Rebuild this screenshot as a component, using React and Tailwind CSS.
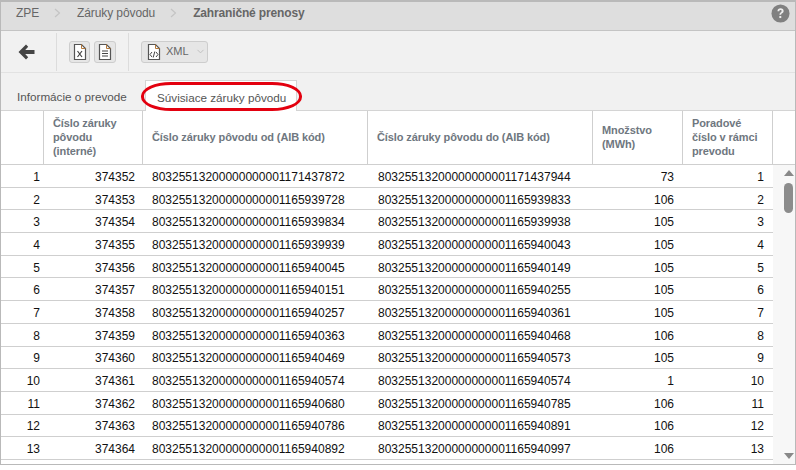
import React from 'react';
import {ChevronDown} from 'lucide-react';

const PREFIX = '8032551320000000000';

// cislo, od, do, mnozstvo
const rows = [
    [374352, '1171437872', '1171437944', 73],
    [374353, '1165939728', '1165939833', 106],
    [374354, '1165939834', '1165939938', 105],
    [374355, '1165939939', '1165940043', 105],
    [374356, '1165940045', '1165940149', 105],
    [374357, '1165940151', '1165940255', 105],
    [374358, '1165940257', '1165940361', 105],
    [374359, '1165940363', '1165940468', 106],
    [374360, '1165940469', '1165940573', 105],
    [374361, '1165940574', '1165940574', 1],
    [374362, '1165940680', '1165940785', 106],
    [374363, '1165940786', '1165940891', 106],
    [374364, '1165940892', '1165940997', 106],
];

function FileIcon({label}) {
    return (
        <svg width="16" height="18" viewBox="0 0 16 18" fill="none">
            <path d="M2.5 1.5h7l4 4v11h-11z" fill="#fff" stroke="#555" strokeWidth="1.2"/>
            <path d="M9.5 1.5v4h4" stroke="#b5793a" strokeWidth="1"/>
            {label === 'x' && <path d="M5.5 8l4.5 6M10 8l-4.5 6" stroke="#444" strokeWidth="1.2"/>}
            {label === 'doc' && <path d="M5 8h6M5 10.500h6M5 13h6" stroke="#444" strokeWidth="1.1"/>}
            {label === 'xml' && <path d="M6 9l-2 2.500 2 2.500M10 9l2 2.500-2 2.500M8.800 8.500l-1.600 6" stroke="#444" strokeWidth="1"/>}
        </svg>
    );
}

function Chevron() {
    return (
        <svg width="7" height="10" viewBox="0 0 7 10" className="mx-[15px]">
            <path d="M1 1l4.500 4L1 9" fill="none" stroke="#c4c4c4" strokeWidth="1.200"/>
        </svg>
    );
}

const headCell = 'border-r border-[#cfcfcf] px-[9px] pb-[1px] flex items-center text-[11px] tracking-[-0.1px] leading-[14px] font-bold text-[#6f7780]';
const grid = 'grid grid-cols-[43px_99px_225px_225px_90px_90px]';

export default function App() {
    return (
        <div className="w-[796px] h-[465px] border border-[#b9b9b9] border-t-2 flex flex-col bg-white overflow-hidden font-['Liberation_Sans',Arial,sans-serif]">

            {/* Breadcrumb */}
            <div className="h-[29px] shrink-0 bg-[#dedede] border-b border-[#c4c4c4] flex items-center pl-[15px] pr-[5px] pb-[6px] text-[12px] tracking-[-0.1px] text-[#666]">
                <span>ZPE</span>
                <Chevron/>
                <span className="ml-[1px]">Záruky pôvodu</span>
                <Chevron/>
                <span className="ml-[1px] font-bold tracking-[-0.15px]">Zahraničné prenosy</span>
                <svg width="19" height="19" viewBox="0 0 20 20" className="ml-auto">
                    <circle cx="10" cy="10" r="9.500" fill="#808080"/>
                    <path d="M6.800 7.600C6.900 5.600 8.200 4.600 10.100 4.600c1.900 0 3.200 1.100 3.200 2.700 0 1.300-.8 1.900-1.600 2.500-.7.500-1 .8-1 1.600H8.900c0-1.300.4-1.900 1.200-2.500.7-.5 1.100-.8 1.100-1.500 0-.7-.5-1.100-1.200-1.100-.8 0-1.200.5-1.300 1.300z" fill="#eee"/>
                    <rect x="8.800" y="12.600" width="2" height="2.200" fill="#eee"/>
                </svg>
            </div>

            {/* Toolbar */}
            <div className="h-[42px] shrink-0 bg-[#f1f1f1] border-b border-[#e2e2e2] flex items-center">
                <div className="w-[56px] h-[38px] border-r border-[#dcdcdc] flex items-center pl-[17px]">
                    <svg width="17" height="16" viewBox="0 0 17 16">
                        <path d="M8 .5L.5 8 8 15.500l2.200-2.200-3-3.200H16.500V5.900H7.200l3-3.200z" fill="#444"/>
                    </svg>
                </div>
                <div className="w-[72px] h-[38px] border-r border-[#dcdcdc] flex items-center pl-[12px] gap-[4px]">
                    <button className="w-[21px] h-[22px] bg-[#e6e6e6] border border-[#cdcdcd] rounded-[3px] flex items-center justify-center">
                        <FileIcon label="x"/>
                    </button>
                    <button className="w-[22px] h-[22px] bg-[#e6e6e6] border border-[#cdcdcd] rounded-[3px] flex items-center justify-center">
                        <FileIcon label="doc"/>
                    </button>
                </div>
                <button className="ml-[12px] w-[67px] h-[22px] bg-[#e6e6e6] border border-[#cdcdcd] rounded-[3px] flex items-center pl-[4px] text-[11px] text-[#666]">
                    <FileIcon label="xml"/>
                    <span className="ml-[4px]">XML</span>
                    <ChevronDown size={11} className="ml-[6px] text-[#bdbdbd]"/>
                </button>
            </div>

            {/* Tabs */}
            <div className="h-[38px] shrink-0 bg-[#f1f1f1] border-b border-[#d4d4d4] flex items-end relative">
                <div className="h-[30px] w-[144px] flex items-center pl-[16px] pt-[3px] text-[11.7px] text-[#555]">Informácie o prevode</div>
                <div className="h-[31px] w-[152px] -mb-px bg-white border border-b-0 border-[#d4d4d4] flex items-center pl-[11px] pt-[3px] text-[11.7px] text-[#555]">Súvisiace záruky pôvodu</div>
                <div className="absolute left-[140px] top-[9px] w-[161px] h-[29px] rounded-[30px/14px] border-[3px] border-[#e3000f]"></div>
            </div>

            {/* Hlavicka tabulky */}
            <div className="h-[54px] shrink-0 flex border-b border-[#cfcfcf]">
                <div className={grid}>
                    <div className={headCell}></div>
                    <div className={headCell}>Číslo záruky pôvodu (interné)</div>
                    <div className={headCell}>Číslo záruky pôvodu od (AIB kód)</div>
                    <div className={headCell}>Číslo záruky pôvodu do (AIB kód)</div>
                    <div className={headCell}>Množstvo (MWh)</div>
                    <div className={headCell}>Poradové číslo v rámci prevodu</div>
                </div>
            </div>

            {/* Riadky + scrollbar */}
            <div className="flex flex-1 min-h-0">
                <div className="w-[772px]">
                    {rows.map((r, i) => (
                        <div key={r[0]} className={`${grid} h-[22.7px] pt-[2px] border-b border-[#cfcfcf] items-center text-[12px] text-[#111]`}>
                            <div className="text-right pr-[4px]">{i + 1}</div>
                            <div className="text-right pr-[8px]">{r[0]}</div>
                            <div className="pl-[9px]">{PREFIX + r[1]}</div>
                            <div className="pl-[10px]">{PREFIX + r[2]}</div>
                            <div className="text-right pr-[9px]">{r[3]}</div>
                            <div className="text-right pr-[9px]">{i + 1}</div>
                        </div>
                    ))}
                </div>
                <div className="flex-1 bg-[#f7f7f7] relative">
                    <div className="absolute left-[11px] top-[5px] w-0 h-0 border-x-[5px] border-x-transparent border-b-[6px] border-b-[#888]"></div>
                    <div className="absolute left-[11px] top-[18px] w-[9px] h-[30px] rounded-[5px] bg-[#8c8c8c]"></div>
                    <div className="absolute left-[11px] bottom-[5px] w-0 h-0 border-x-[5px] border-x-transparent border-t-[6px] border-t-[#888]"></div>
                </div>
            </div>
        </div>
    );
}
